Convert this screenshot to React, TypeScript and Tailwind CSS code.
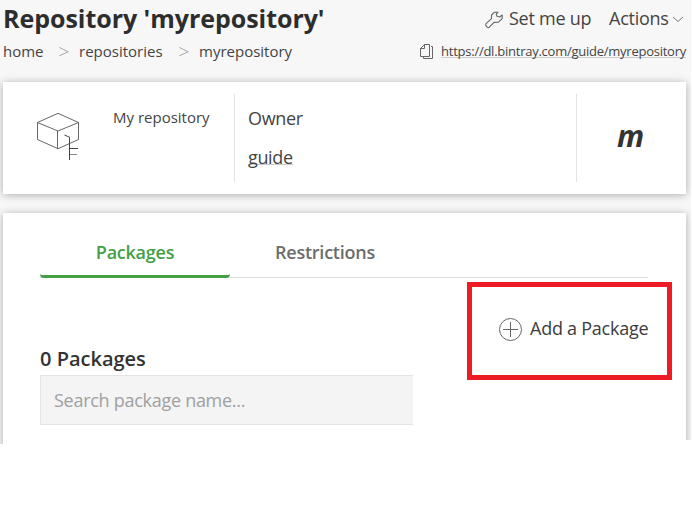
import React from "react";

function Wrench() {
  return (
    <svg width="20" height="20" viewBox="0 0 20 20" fill="none" stroke="#666" strokeWidth="1.1" strokeLinejoin="round" className="mt-[10px] shrink-0">
      <path d="M14 2.2 L10.3 2.3 L7.5 5 L7.5 8.6 L2 13.7 Q1.2 15.2 2.4 16.4 Q4 18.2 5.3 17.2 L10.1 12.4 L14.2 12.3 L18.2 8.7 V5 L15.7 7 L13 6.2 L12.3 4.2 Z" />
    </svg>
  );
}

function Copy() {
  return (
    <svg width="14" height="16" viewBox="0 0 14 16" fill="none" stroke="#666" className="mt-[6px] shrink-0">
      <path d="M4.5 .5 H9.5 V12.5 H.5 V4.5 L4.5 .5 V4.5 H.5" />
      <path d="M11 2.5 H12.5 V14.5 H3.5 V13" />
    </svg>
  );
}

function Box() {
  return (
    <svg width="46" height="50" viewBox="0 0 46 50" fill="none" stroke="#555" className="shrink-0">
      <path d="M1.5 10.5 L22 1.3 L42.5 10.5 V27.5 L22 36.7 L1.5 27.5 Z M1.5 10.5 L22 19 L42.5 10.5 M21.5 19 V36.7" strokeWidth=".9" />
      <path d="M28.5 23 L33.5 25.2 V48 M34 36.5 H42" stroke="#444" />
      <path d="M34 42.5 H41" stroke="#888" />
    </svg>
  );
}

export default function App() {
  return (
    <div className="h-[514px] w-[692px] overflow-hidden bg-white font-['Open_Sans',sans-serif] text-[#333]">
      <div className="h-[444px] w-[691px] overflow-hidden bg-[#f7f7f7] [clip-path:polygon(0_0,100%_0,100%_440px,686px_440px,686px_444px,0_444px)]">
        <header className="flex h-[82px] justify-between pr-[5px] pl-[3px]">
          <div>
            <h1 className="h-[38px] text-[25px] leading-[37px] font-bold tracking-[-0.04px] whitespace-nowrap text-[#2d2d2d]">Repository 'myrepository'</h1>
            <nav className="flex text-[15px] leading-[27px] whitespace-nowrap text-[#444]">
              <span className="w-[55px]">home</span>
              <span className="w-[21px] text-[20px] font-light text-[#999]">&gt;</span>
              <span className="w-[99px]">repositories</span>
              <span className="w-[21px] text-[20px] font-light text-[#999]">&gt;</span>
              <span>myrepository</span>
            </nav>
          </div>
          <div>
            <div className="flex h-[38px] justify-end text-[18px] leading-[37px] tracking-[-0.25px] whitespace-nowrap text-[#444]">
              <Wrench />
              <span className="ml-[5px] w-[100px]">Set me up</span>
              <span className="w-[63px]">Actions</span>
              <svg width="12" height="7" viewBox="0 0 12 7" fill="none" stroke="#777" className="mt-[16px] mr-[2px]"><path d="M1 1 L6 5.5 L11 1" /></svg>
            </div>
            <div className="flex justify-end text-[13px] leading-[27px] tracking-[-0.25px] text-[#444]">
              <Copy />
              <span className="mt-[5px] ml-[7px] h-[15px] border-b border-[#ccc] leading-[17px] whitespace-nowrap">https://dl.bintray.com/guide/myrepository</span>
            </div>
          </div>
        </header>

        <section className="ml-[3px] flex h-[112px] w-[683px] bg-white py-[12px] shadow-[0_1px_8px_rgba(0,0,0,0.3)]">
          <div className="flex w-[231px] pl-[33px]">
            <div className="mt-[18px] w-[77px]"><Box /></div>
            <span className="mt-[13px] text-[15px] leading-[20px] whitespace-nowrap text-[#444]">My repository</span>
          </div>
          <div className="flex w-[342px] flex-col items-start border-l border-[#e3e3e3] pl-[13px] text-[18px] tracking-[-0.35px] text-[#444]">
            <span className="mt-[11px] leading-[26px]">Owner</span>
            <span className="mt-[17px] h-[17px] border-b border-[#ccc] leading-[18px]">guide</span>
          </div>
          <div className="flex-1 border-l border-[#e3e3e3] pt-[20px] pr-[2px] text-center text-[30px] leading-[44px] font-bold italic">m</div>
        </section>

        <main className="mt-[19px] ml-[3px] h-[260px] w-[683px] bg-white px-[37px] pt-[22px] shadow-[0_1px_8px_rgba(0,0,0,0.3)]">
          <div className="flex h-[43px] w-[608px] border-b border-[#ddd] text-center text-[18px] leading-[35px] font-semibold tracking-[-0.25px]">
            <span className="h-[43px] w-[190px] rounded-sm border-b-[3px] border-[#43a047] text-[#43a047]">Packages</span>
            <span className="w-[190px] text-[#6c6c6c]">Restrictions</span>
          </div>
          <div className="flex">
            <div className="w-[427px] shrink-0 pt-[65px]">
              <h2 className="h-[32px] text-[20px] leading-[31px] font-semibold">0 Packages</h2>
              <div className="h-[50px] w-[373px] border-y border-l border-[#e4e4e4] bg-[#f4f4f4] pl-[13px] text-[18px] leading-[48px] tracking-[-0.28px] text-[#a0a0a0]">Search package name...</div>
            </div>
            <button className="mt-[4px] flex h-[98px] w-[205px] shrink-0 items-center border-[5px] border-[#ed1c24] pb-[4px] pl-[26px] text-left text-[18px] tracking-[-0.25px] whitespace-nowrap text-[#3c3c3c]">
              <svg width="25" height="25" viewBox="0 0 25 25" fill="none" stroke="#666" className="shrink-0"><circle cx="12.5" cy="12.5" r="11" /><path d="M5 12.5 H20 M12.5 5 V20" /></svg>
              <span className="-mt-px ml-[7px]">Add a Package</span>
            </button>
          </div>
        </main>
      </div>
    </div>
  );
}
